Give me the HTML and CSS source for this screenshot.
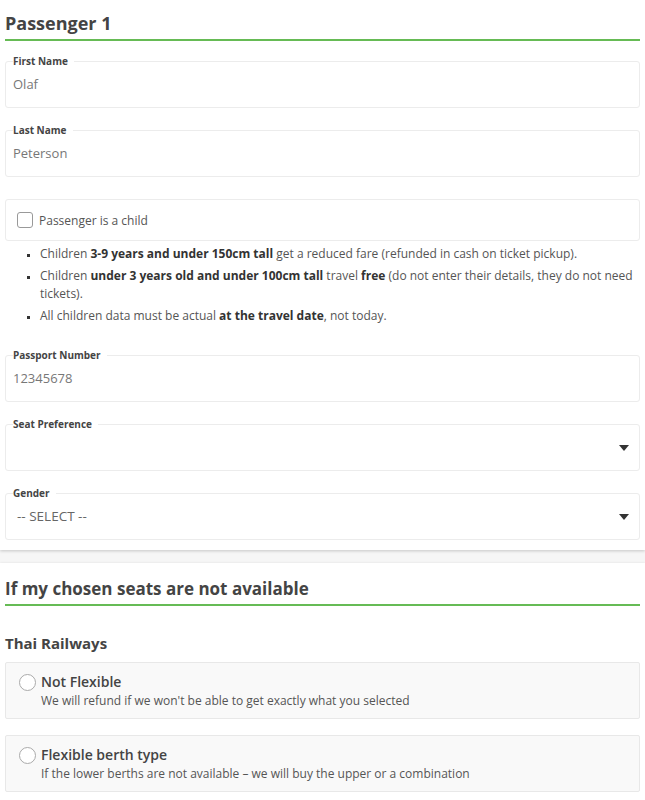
FILE: index.html
```html
<!DOCTYPE html>
<html lang="en">
<head>
  <meta charset="UTF-8">
  <title>Passenger details</title>
  <meta name="viewport" content="width=device-width, initial-scale=1.0">
  <link rel="stylesheet" href="styles.css">
</head>
<body>
  <div class="card">
    <h2 class="section-title">Passenger 1</h2>

    <fieldset class="field">
      <legend>First Name</legend>
      <input type="text" value="Olaf">
    </fieldset>

    <fieldset class="field">
      <legend>Last Name</legend>
      <input type="text" value="Peterson">
    </fieldset>

    <label class="check-box">
      <span class="check"></span>
      Passenger is a child
    </label>

    <ul class="notes">
      <li>Children <b>3-9 years and under 150cm tall</b> get a reduced fare (refunded in cash on ticket pickup).</li>
      <li>Children <b>under 3 years old and under 100cm tall</b> travel <b>free</b> (do not enter their details, they do not need tickets).</li>
      <li>All children data must be actual <b>at the travel date</b>, not today.</li>
    </ul>

    <fieldset class="field">
      <legend>Passport Number</legend>
      <input type="text" value="12345678">
    </fieldset>

    <fieldset class="field select">
      <legend>Seat Preference</legend>
      <div class="select-value"></div>
      <span class="arrow"></span>
    </fieldset>

    <fieldset class="field select">
      <legend>Gender</legend>
      <div class="select-value">-- SELECT --</div>
      <span class="arrow"></span>
    </fieldset>
  </div>

  <div class="card">
    <h2 class="section-title small">If my chosen seats are not available</h2>

    <h3 class="operator">Thai Railways</h3>

    <label class="option">
      <span class="radio"></span>
      <span class="option-text">
        <span class="option-title">Not Flexible</span>
        <span class="option-desc">We will refund if we won't be able to get exactly what you selected</span>
      </span>
    </label>

    <label class="option">
      <span class="radio"></span>
      <span class="option-text">
        <span class="option-title">Flexible berth type</span>
        <span class="option-desc">If the lower berths are not available – we will buy the upper or a combination</span>
      </span>
    </label>
  </div>
</body>
</html>
```

FILE: styles.css
```css
html, body {
  margin: 0;
  padding: 0;
  font-family: "Open Sans", "Noto Sans", sans-serif;
  background: #f6f6f6;
  color: #444;
}

.card {
  background: #fff;
  padding: 0 5px 10px 5px;
  box-shadow: 0 1px 3px rgba(0, 0, 0, 0.2);
  margin-bottom: 13px;
}

.section-title {
  margin: 0;
  padding-top: 9px;
  font-size: 18px;
  line-height: 28px;
  font-weight: 700;
  color: #444;
  border-bottom: 2px solid #66bb55;
  padding-bottom: 2px;
}

.section-title.small {
  font-size: 17px;
  padding-top: 12px;
  padding-bottom: 1px;
}

.field {
  position: relative;
  margin: 14px 0 0 0;
  padding: 0 7px 9px 7px;
  border: 1px solid #ececec;
  border-radius: 3px;
  min-width: 0;
}

.field + .field {
  margin-top: 16px;
}

.field legend {
  padding: 0 6px 0 0;
  font-size: 10px;
  font-weight: 700;
  color: #444;
  line-height: 12px;
}

.field input,
.select-value {
  display: block;
  width: 100%;
  box-sizing: border-box;
  border: 0;
  padding: 7px 0 4px 0;
  margin: 0;
  font-family: inherit;
  font-size: 13px;
  line-height: 20px;
  height: 31px;
  color: #777;
  background: transparent;
  outline: none;
}

.select-value {
  padding-left: 4px;
  font-size: 13.5px;
  color: #666;
}

.arrow {
  position: absolute;
  right: 10px;
  top: 15px;
  width: 0;
  height: 0;
  border-left: 5px solid transparent;
  border-right: 5px solid transparent;
  border-top: 6px solid #333;
}

.check-box {
  display: flex;
  align-items: center;
  gap: 6px;
  margin-top: 22px;
  height: 40px;
  padding: 0 11px;
  border: 1px solid #ececec;
  border-radius: 3px;
  font-size: 12px;
  color: #555;
}

.check {
  width: 14px;
  height: 14px;
  border: 1px solid #999;
  border-radius: 3px;
}

.notes {
  margin: 4px 0 24px 0;
  padding: 0 0 0 35px;
  list-style: square;
  font-size: 12px;
  line-height: 18px;
  color: #555;
}

.notes li {
  margin-bottom: 4px;
}

.notes li::marker {
  font-size: 9px;
  color: #333;
}

.notes b {
  color: #333;
}

.operator {
  margin: 26px 0 0 0;
  font-size: 15px;
  line-height: 22px;
  font-weight: 700;
  color: #444;
}

.option {
  display: flex;
  align-items: flex-start;
  gap: 5px;
  margin-top: 8px;
  padding: 9px 13px 8px 13px;
  background: #f9f9f9;
  border: 1px solid #e8e8e8;
  border-radius: 2px;
}

.option + .option {
  margin-top: 16px;
}

.radio {
  flex-shrink: 0;
  width: 15px;
  height: 15px;
  margin-top: 2px;
  border: 1px solid #aaa;
  border-radius: 50%;
  background: #fff;
}

.option-text {
  display: flex;
  flex-direction: column;
}

.option-title {
  font-size: 14px;
  line-height: 20px;
  font-weight: 600;
  color: #444;
}

.option-desc {
  font-size: 12px;
  line-height: 18px;
  color: #555;
}
```
